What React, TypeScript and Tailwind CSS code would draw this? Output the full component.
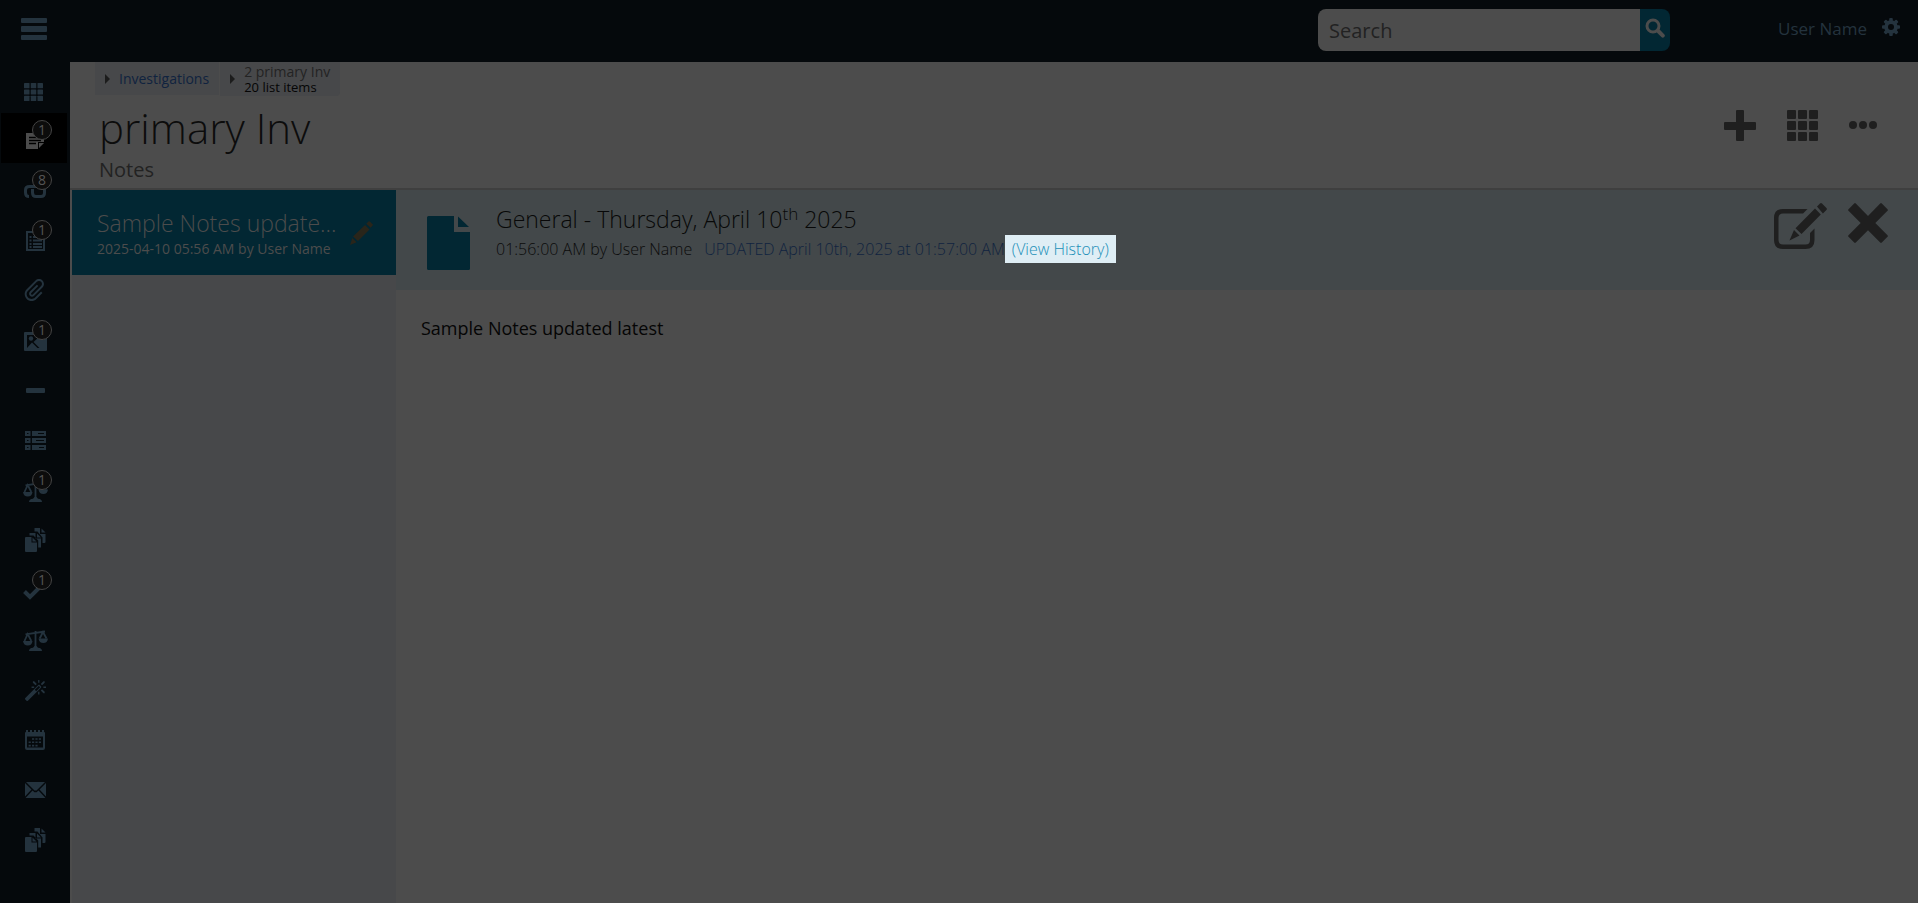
import React from "react";
import { ImAttachment, ImMagicWand } from "react-icons/im";

interface IconProps {
  className?: string;
}

function GridIcon({ className }: IconProps) {
  return (
    <svg className={className} viewBox="0 0 31 31" preserveAspectRatio="none" fill="currentColor" aria-hidden="true">
      {[0, 11, 22].map((y) =>
        [0, 11, 22].map((x) => <rect key={`${x}-${y}`} x={x} y={y} width="9" height="9" rx="1" />)
      )}
    </svg>
  );
}

function MenuIcon({ className }: IconProps) {
  return (
    <svg className={className} viewBox="0 0 26 22" fill="currentColor" aria-hidden="true">
      <rect width="26" height="5" rx="1" />
      <rect y="8" width="26" height="6" rx="1" />
      <rect y="17" width="26" height="5" rx="1" />
    </svg>
  );
}

function NoteIcon() {
  return (
    <svg width="18" height="16" viewBox="0 0 18 16" aria-hidden="true">
      <path fill="#4c4c4c" d="M0 0h18v9h-6v7H0z" />
      <path fill="#4c4c4c" d="M13 10h5l-5 5z" />
      <path stroke="#000" strokeWidth="1.4" d="M3 4.5h12M3 7.5h12M3 10.5h7" />
    </svg>
  );
}

function LinkIcon() {
  return (
    <svg width="22" height="13" viewBox="0 0 22 13" fill="none" stroke="currentColor" strokeWidth="3" aria-hidden="true">
      <path d="M12 1.5H5.5Q1.5 1.5 1.5 5v2.500Q1.500 11.500 5 11.500" />
      <path d="M8.500 4v3.500Q8.500 11.500 12 11.500h5Q20.500 11.500 20.500 8V5Q20.500 1.500 17 1.500h-4" />
    </svg>
  );
}

function ListIcon() {
  return (
    <svg width="19" height="20" viewBox="0 0 19 20" aria-hidden="true">
      <path fill="none" stroke="currentColor" strokeWidth="2" d="M1 1h17v18H1z" />
      <path stroke="currentColor" strokeWidth="2" d="M3.500 6h2M7 6h9M3.500 9.500h2M7 9.500h9M3.500 13h2M7 13h9M3.500 16h2M7 16h9" />
    </svg>
  );
}

function PictureIcon() {
  return (
    <svg width="23" height="19" viewBox="0 0 23 19" aria-hidden="true">
      <rect width="23" height="19" rx="1" fill="currentColor" />
      <path fill="#05090c" d="M3 16V3h17v13z" />
      <circle cx="7" cy="6.500" r="2.200" fill="currentColor" />
      <path fill="currentColor" d="M3 16l5-5.500L13.500 16zM9.500 10l6-5.500L20 8v8h-4.500z" />
    </svg>
  );
}

function MinusIcon() {
  return (
    <svg width="19" height="5" viewBox="0 0 19 5" fill="currentColor" aria-hidden="true">
      <rect width="19" height="5" rx="1" />
    </svg>
  );
}

function RowsIcon() {
  return (
    <svg width="21" height="19" viewBox="0 0 21 19" aria-hidden="true">
      {[0, 7, 14].map((y, i) => (
        <g key={y} fill="currentColor">
          <rect y={y} width="5.500" height="5" />
          <rect x="7" y={y} width="14" height="5" />
          <rect x="2" y={y + 2} width="1.500" height="1" fill="#05090c" />
          <rect x={[13, 11, 14][i]} y={y + 2} width={[6, 8, 5][i]} height="1" fill="#05090c" />
        </g>
      ))}
    </svg>
  );
}

function ScalesIcon() {
  return (
    <svg width="25" height="21" viewBox="0 0 25 21" aria-hidden="true">
      <path fill="none" stroke="currentColor" strokeWidth="1.800" d="M2.500 4.300L22 1.500M12.500 1v16M1.500 11L4.700 4l3.600 7M16.700 8.500l3.300-6.500 3.500 6.500" />
      <path fill="currentColor" d="M0 11h9.500q-.6 4.500-4.700 4.500T0 11zM15.500 8.500H25q-.6 4.500-4.700 4.500t-4.800-4.500zM6 21q0-3 4-3.300l1.500-1.700h2l1.500 1.700q4 .3 4 3.300z" />
    </svg>
  );
}

function CopiesIcon() {
  return (
    <svg width="21" height="24" viewBox="0 0 21 24" fill="currentColor" aria-hidden="true">
      <path d="M1 9h5.500v5.500H12V23q0 1-1 1H1q-1 0-1-1V10q0-1 1-1z" />
      <path d="M7.500 9.500l4 4h-4z" />
      <path d="M4.500 7.500V5h6v5.500H16V19.500h-2.800v-7L8.500 7.500z" />
      <path d="M12 5.500l4 4h-4z" />
      <path d="M9.500 3.500V0H15v6h5.500v8q0 1-1 1h-2V9.500l-5-6z" />
      <path d="M16.500.5l4 4h-4z" />
    </svg>
  );
}

function CheckIcon() {
  return (
    <svg width="24" height="18" viewBox="0 0 24 18" fill="none" stroke="currentColor" strokeWidth="4" aria-hidden="true">
      <path d="M1.500 9.500l5.500 5.500L20 2" />
    </svg>
  );
}

function CalendarIcon() {
  return (
    <svg width="20" height="20" viewBox="0 0 20 20" aria-hidden="true">
      <path fill="currentColor" fillRule="evenodd" d="M1 2h18q1 0 1 1v15q0 2-2 2H2q-2 0-2-2V3q0-1 1-1zm1 4.500V17.500h16V6.500z" />
      <path stroke="currentColor" strokeWidth="2" strokeDasharray="2 2" d="M1 1h18" />
      <path stroke="currentColor" strokeWidth="1.600" strokeDasharray="2.200 1.200" d="M7 9h10M3.600 12.300H17M3.600 15.600h10" />
    </svg>
  );
}

function MailIcon() {
  return (
    <svg width="21" height="16" viewBox="0 0 21 16" fill="currentColor" aria-hidden="true">
      <path d="M1 0h19l-8.500 8.500h-2zM0 1l6.500 6.500L0 14.500zM21 1l-6.500 6.500 6.500 7zM7.500 8.500l2 1.800h2l2-1.800L20.500 16H.5z" />
    </svg>
  );
}

function SearchIcon() {
  return (
    <svg width="20" height="20" viewBox="0 0 20 20" fill="none" stroke="currentColor" aria-hidden="true">
      <circle cx="8" cy="8" r="6" strokeWidth="3" />
      <path strokeWidth="4" strokeLinecap="round" d="M13.200 13l4.600 4.600" />
    </svg>
  );
}

function GearIcon() {
  return (
    <svg width="18" height="18" viewBox="0 0 18 18" aria-hidden="true">
      <g fill="currentColor">
        {[0, 45, 90, 135].map((a) => (
          <rect key={a} x="7.200" width="3.600" height="18" rx="1" transform={`rotate(${a} 9 9)`} />
        ))}
        <circle cx="9" cy="9" r="6.800" />
      </g>
      <circle cx="9" cy="9" r="3" fill="#05090c" />
    </svg>
  );
}

function PlusIcon() {
  return (
    <svg width="32" height="31" viewBox="0 0 32 31" fill="currentColor" aria-hidden="true">
      <rect y="12" width="32" height="8" rx="1" />
      <rect x="12" width="8" height="31" rx="1" />
    </svg>
  );
}

function DotsIcon() {
  return (
    <svg width="28" height="8" viewBox="0 0 28 8" fill="currentColor" aria-hidden="true">
      <circle cx="4" cy="4" r="4" />
      <circle cx="14" cy="4" r="4" />
      <circle cx="24" cy="4" r="4" />
    </svg>
  );
}

function EditIcon() {
  return (
    <svg width="53" height="46" viewBox="0 0 53 46" fill="currentColor" aria-hidden="true">
      <path d="M33.500 6L29 10.500H9Q4.500 10.500 4.500 15v22q0 4.500 4.500 4.500h22.500q4.500 0 4.500-4.500V30l4.500-4.500V37q0 9-9 9H9q-9 0-9-9V15Q0 6 9 6z" />
      <path d="M41 5.500L46.800 11.500 27.500 31 21.500 25.300zM20 27l5.500 5.500L15.500 37.500zM43 3.500L46 .600q1-1 2 0L52.400 5q1 1 0 2l-3.500 3.500z" />
    </svg>
  );
}

function CloseIcon() {
  return (
    <svg width="40" height="40" viewBox="0 0 40 40" fill="currentColor" aria-hidden="true">
      <path d="M6.200.500q.8-.8 1.600 0L20 13 32.200.500q.8-.8 1.600 0l5.700 5.700q.8.800 0 1.600L27.300 20l12.200 12.200q.8.800 0 1.600l-5.700 5.700q-.8.800-1.600 0L20 27.300 7.800 39.500q-.8.800-1.600 0L.500 33.800q-.8-.8 0-1.600L12.700 20 .500 7.800q-.8-.8 0-1.600z" />
    </svg>
  );
}

function FileIcon() {
  return (
    <svg width="43" height="54" viewBox="0 0 43 54" fill="currentColor" aria-hidden="true">
      <path d="M1.500 0H27v16h16v36.500q0 1.500-1.500 1.500h-40Q0 54 0 52.500v-51Q0 0 1.500 0z" />
      <path d="M31 .500L42 11H31z" />
    </svg>
  );
}

function PencilIcon() {
  return (
    <svg width="23" height="24" viewBox="0 0 23 24" fill="currentColor" aria-hidden="true">
      <path d="M15 4l4.500 4.500L8 20 3 15.500zM2.300 17l4.300 4.300L0 24zM16.300 2.700L18.500.5q.7-.7 1.400 0L22.600 3.200q.7.7 0 1.400l-2 2.200z" />
    </svg>
  );
}

interface NavItem {
  label: string;
  icon: React.ReactNode;
  badge?: number;
  active?: boolean;
}

const navItems: NavItem[] = [
  { label: "Apps", icon: <GridIcon className="w-[19px] h-[18px] mt-1 mr-1" /> },
  { label: "Notes", icon: <NoteIcon />, badge: 1, active: true },
  { label: "Links", icon: <LinkIcon />, badge: 8 },
  { label: "Forms", icon: <ListIcon />, badge: 1 },
  { label: "Attachments", icon: <ImAttachment size={22} /> },
  { label: "Images", icon: <PictureIcon />, badge: 1 },
  { label: "Collapse", icon: <MinusIcon /> },
  { label: "Records", icon: <RowsIcon /> },
  { label: "Legal", icon: <ScalesIcon />, badge: 1 },
  { label: "Documents", icon: <CopiesIcon /> },
  { label: "Tasks", icon: <CheckIcon />, badge: 1 },
  { label: "Compliance", icon: <ScalesIcon /> },
  { label: "Wizard", icon: <ImMagicWand size={21} className="-scale-x-100" /> },
  { label: "Calendar", icon: <CalendarIcon /> },
  { label: "Mail", icon: <MailIcon /> },
  { label: "Templates", icon: <CopiesIcon /> },
];

function Sidebar() {
  return (
    <nav className="w-[70px] shrink-0 bg-[#05090c] pt-px text-[#24333e]">
      {navItems.map((item) => (
        <a
          key={item.label}
          href="#"
          aria-label={item.label}
          className={`relative ml-px mr-[3px] flex h-[50px] items-center justify-center pl-0.5 pt-1 ${
            item.active ? "bg-black" : ""
          }`}
        >
          <span className={item.badge ? "pt-0.5" : ""}>{item.icon}</span>
          {item.badge && (
            <span className="absolute left-[31px] top-[7px] flex size-5 items-center justify-center rounded-full border border-[#444] bg-[#0c0c0c] text-sm text-[#555]">
              {item.badge}
            </span>
          )}
        </a>
      ))}
    </nav>
  );
}

function TopBar() {
  return (
    <header className="flex h-[62px] items-center bg-[#05090c] text-[#24333e]">
      <button aria-label="Menu" className="ml-[21px] mb-1">
        <MenuIcon className="w-[26px] h-[22px]" />
      </button>
      <form className="ml-auto flex h-[42px] overflow-hidden rounded-lg mb-0.5">
        <input
          type="text"
          aria-label="Search"
          placeholder="Search"
          className="w-[322px] bg-[#4c4c4c] px-[11px] pt-0.5 text-xl text-[#222] placeholder:text-[#222] outline-none"
        />
        <button type="button" aria-label="Go" className="flex w-[30px] justify-center bg-[#022733] pt-[9px] text-[#4c4c4c]">
          <SearchIcon />
        </button>
      </form>
      <div className="ml-[108px] mr-[18px] mb-1 flex items-center gap-[15px]">
        <span className="text-[17px]">User Name</span>
        <button aria-label="Settings" className="pb-1">
          <GearIcon />
        </button>
      </div>
    </header>
  );
}

function PageHeader() {
  return (
    <div className="flex h-[128px] justify-between border-b-2 border-[#3f3f3f]">
      <div className="pl-[25px]">
        <div className="flex items-start gap-px leading-none">
          <div className="flex h-[33px] items-center gap-[9px] bg-[#47484a] px-2.5">
            <span className="border-y-[5px] border-l-[5px] border-y-transparent border-l-[#1c1c1c]" />
            <a href="#" className="text-sm text-[#10233f]">
              Investigations
            </a>
          </div>
          <div className="flex h-[34px] items-center gap-[9px] rounded-br bg-[#47484a] px-2.5">
            <span className="border-y-[5px] border-l-[5px] border-y-transparent border-l-[#1c1c1c]" />
            <span className="flex flex-col">
              <span className="text-sm leading-4 text-[#232323]">2 primary Inv</span>
              <span className="text-[13px] leading-[14px] text-[#050505]">20 list items</span>
            </span>
          </div>
        </div>
        <h1 className="pl-1 pt-0.5 text-[42px] font-light leading-[60px] text-[#0c0c0c]">primary Inv</h1>
        <h2 className="pl-1 text-xl leading-6 text-[#222]">Notes</h2>
      </div>
      <div className="flex h-[126px] items-center gap-[31px] pr-[41px] text-[#1f1f1f]">
        <button aria-label="Add">
          <PlusIcon />
        </button>
        <button aria-label="Grid view">
          <GridIcon className="h-[31px] w-[31px]" />
        </button>
        <button aria-label="More">
          <DotsIcon />
        </button>
      </div>
    </div>
  );
}

function NoteList() {
  return (
    <aside className="w-[324px] shrink-0 bg-[#47484a]">
      <a href="#" className="flex h-[85px] items-center justify-between bg-[#022733] pl-[25px] pr-[23px] text-[#4c4c4c]">
        <div>
          <p className="text-[23px] font-light leading-8">Sample Notes update...</p>
          <p className="text-[14px] leading-5">2025-04-10 05:56 AM by User Name</p>
        </div>
        <span className="text-[#29251a]">
          <PencilIcon />
        </span>
      </a>
    </aside>
  );
}

function NoteDetail() {
  return (
    <main className="flex-1">
      <div className="flex h-[100px] items-start bg-[#43484a]">
        <span className="pl-[31px] pt-[26px] text-[#022733]">
          <FileIcon />
        </span>
        <div className="pl-[26px] pt-[13px]">
          <h3 className="text-[23px] font-light leading-8 text-[#080808]">
            General - Thursday, April 10<sup className="text-[17px]">th</sup> 2025
          </h3>
          <p className="flex items-center whitespace-pre text-base font-light leading-7 text-[#0b0b0b]">
            <span>01:56:00 AM by User Name</span>
            <span className="pl-3 text-[#10233f]">UPDATED April 10th, 2025 at 01:57:00 AM</span>
            <a href="#" className="bg-[#dfeef5] px-[7px] text-[#1b8fb8]">
              (View History)
            </a>
          </p>
        </div>
        <div className="ml-auto flex items-start gap-[21px] pr-[30px] pt-[13px] text-[#1f1f1f]">
          <button aria-label="Edit">
            <EditIcon />
          </button>
          <button aria-label="Close">
            <CloseIcon />
          </button>
        </div>
      </div>
      <p className="px-[25px] pt-6 text-lg leading-7 text-[#050505]">Sample Notes updated latest</p>
    </main>
  );
}

export default function App() {
  return (
    <div className="flex min-h-screen flex-col bg-[#4c4c4c] font-['Open_Sans','Noto_Sans',sans-serif]">
      <TopBar />
      <div className="flex flex-1">
        <Sidebar />
        <div className="flex flex-1 flex-col">
          <PageHeader />
          <div className="flex flex-1 pl-0.5">
            <NoteList />
            <NoteDetail />
          </div>
        </div>
      </div>
    </div>
  );
}
